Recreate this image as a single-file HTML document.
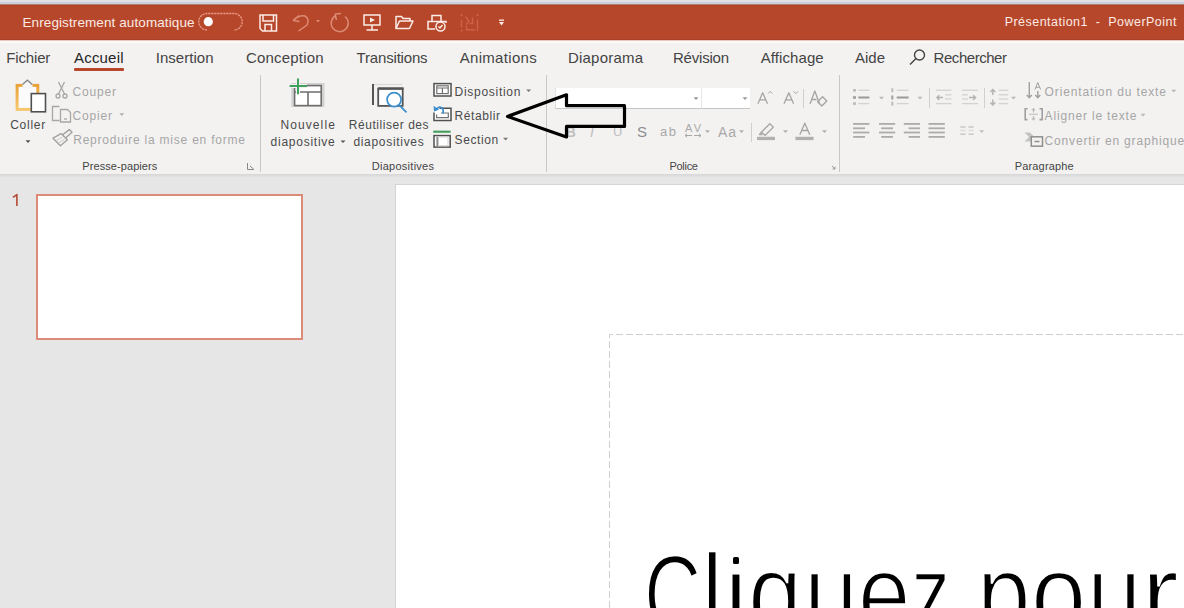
<!DOCTYPE html>
<html><head><meta charset="utf-8"><style>
html,body{margin:0;padding:0;width:1184px;height:608px;overflow:hidden;background:#e6e6e6}
.t{position:absolute;white-space:nowrap;line-height:1;font-family:"Liberation Sans",sans-serif}
.r{position:absolute}
svg{position:absolute;left:0;top:0}
</style></head><body>
<div class="r" style="left:0px;top:0px;width:1184px;height:2px;background:#e1e0e5"></div>
<div class="r" style="left:0px;top:2px;width:1184px;height:2px;background:#cbd1db"></div>
<div class="r" style="left:0px;top:4px;width:1184px;height:1px;background:#b98070"></div>
<div class="r" style="left:0px;top:5px;width:1184px;height:1px;background:#a9432a"></div>
<div class="r" style="left:0px;top:6px;width:1184px;height:33px;background:#b7472a"></div>
<div class="r" style="left:0px;top:39px;width:1184px;height:1px;background:#ab4128"></div>
<div class="r" style="left:0px;top:40px;width:1184px;height:1px;background:#e8c8bf"></div>
<div class="r" style="left:0px;top:41px;width:1184px;height:2px;background:#fdf9f6"></div>
<div class="r" style="left:0px;top:43px;width:1184px;height:131px;background:#f3f2f1"></div>
<div class="r" style="left:0px;top:174px;width:1184px;height:3px;background:linear-gradient(#d6d6d6,#e2e2e2)"></div>
<div class="r" style="left:0px;top:177px;width:1184px;height:431px;background:#e6e6e6"></div>
<div class="t" style="left:22.5px;top:16.2px;font-size:13.5px;letter-spacing:0.096px;color:#fbeae5;">Enregistrement automatique</div>
<div class="t" style="left:1004.7px;top:15.7px;font-size:12.5px;letter-spacing:0.466px;color:#fbeae5;">Présentation1&nbsp;&nbsp;-&nbsp;&nbsp;PowerPoint</div>
<div class="t" style="left:6.3px;top:49.9px;font-size:15px;letter-spacing:-0.168px;color:#444;">Fichier</div>
<div class="t" style="left:74.0px;top:49.9px;font-size:15px;letter-spacing:0.191px;color:#262626;">Accueil</div>
<div class="t" style="left:155.7px;top:49.9px;font-size:15px;letter-spacing:0.033px;color:#444;">Insertion</div>
<div class="t" style="left:245.9px;top:49.9px;font-size:15px;letter-spacing:0.213px;color:#444;">Conception</div>
<div class="t" style="left:356.6px;top:49.9px;font-size:15px;letter-spacing:-0.180px;color:#444;">Transitions</div>
<div class="t" style="left:459.7px;top:49.9px;font-size:15px;letter-spacing:0.311px;color:#444;">Animations</div>
<div class="t" style="left:568.0px;top:49.9px;font-size:15px;letter-spacing:0.204px;color:#444;">Diaporama</div>
<div class="t" style="left:673.0px;top:49.9px;font-size:15px;letter-spacing:-0.218px;color:#444;">Révision</div>
<div class="t" style="left:760.7px;top:49.9px;font-size:15px;letter-spacing:0.091px;color:#444;">Affichage</div>
<div class="t" style="left:855.0px;top:49.9px;font-size:15px;letter-spacing:-0.007px;color:#444;">Aide</div>
<div class="t" style="left:933.6px;top:49.9px;font-size:15px;letter-spacing:-0.459px;color:#444;">Rechercher</div>
<div class="r" style="left:74px;top:68px;width:50px;height:3px;background:#b7472a;border-radius:1px"></div>
<div class="r" style="left:260px;top:75px;width:1px;height:97px;background:#c8c8c8"></div>
<div class="r" style="left:546px;top:75px;width:1px;height:97px;background:#c8c8c8"></div>
<div class="r" style="left:839px;top:75px;width:1px;height:97px;background:#c8c8c8"></div>
<div class="t" style="left:10.2px;top:118.8px;font-size:12px;letter-spacing:0.732px;color:#4a4a4a;">Coller</div>
<div class="t" style="left:72.4px;top:85.8px;font-size:12px;letter-spacing:0.848px;color:#a6a6a6;">Couper</div>
<div class="t" style="left:72.4px;top:109.8px;font-size:12px;letter-spacing:0.850px;color:#a6a6a6;">Copier</div>
<div class="t" style="left:73.2px;top:133.8px;font-size:12px;letter-spacing:0.785px;color:#a6a6a6;">Reproduire la mise en forme</div>
<div class="t" style="left:82.3px;top:161.3px;font-size:11px;letter-spacing:0.079px;color:#444;">Presse-papiers</div>
<div class="t" style="left:280.5px;top:118.8px;font-size:12px;letter-spacing:1.087px;color:#4a4a4a;">Nouvelle</div>
<div class="t" style="left:270.6px;top:135.8px;font-size:12px;letter-spacing:0.750px;color:#4a4a4a;">diapositive</div>
<div class="t" style="left:348.8px;top:118.8px;font-size:12px;letter-spacing:0.546px;color:#4a4a4a;">Réutiliser des</div>
<div class="t" style="left:353.4px;top:135.8px;font-size:12px;letter-spacing:0.691px;color:#4a4a4a;">diapositives</div>
<div class="t" style="left:454.6px;top:85.8px;font-size:12px;letter-spacing:0.711px;color:#4a4a4a;">Disposition</div>
<div class="t" style="left:454.6px;top:109.8px;font-size:12px;letter-spacing:0.564px;color:#4a4a4a;">Rétablir</div>
<div class="t" style="left:454.6px;top:133.8px;font-size:12px;letter-spacing:0.596px;color:#4a4a4a;">Section</div>
<div class="t" style="left:371.8px;top:161.3px;font-size:11px;letter-spacing:0.263px;color:#444;">Diapositives</div>
<div class="r" style="left:555px;top:88px;width:146px;height:21px;background:#fff;border-bottom:1px solid #c6c6c6;border-left:1px solid #e0e0e0;box-sizing:border-box"></div>
<div class="r" style="left:701px;top:88px;width:49px;height:21px;background:#fff;border-bottom:1px solid #c6c6c6;border-left:1px solid #e6e6e6;box-sizing:border-box"></div>
<div class="r" style="left:803px;top:89px;width:1px;height:19px;background:#cfcfcf"></div>
<div class="t" style="left:565.8px;top:124.5px;font-size:14px;letter-spacing:0.000px;color:#bdbdbd;font-weight:bold;">B</div>
<div class="t" style="left:590.0px;top:124.5px;font-size:14px;letter-spacing:0.000px;color:#bdbdbd;font-style:italic;">I</div>
<div class="t" style="left:613.0px;top:125.4px;font-size:13px;letter-spacing:0.000px;color:#bdbdbd;">U</div>
<div class="t" style="left:637.0px;top:124.3px;font-size:15px;letter-spacing:0.000px;color:#8c8c8c;">S</div>
<div class="t" style="left:660.0px;top:125.4px;font-size:13px;letter-spacing:1.540px;color:#a8a8a8;">ab</div>
<div class="t" style="left:685.0px;top:122.7px;font-size:11px;letter-spacing:2.142px;color:#a8a8a8;">AV</div>
<div class="t" style="left:718.0px;top:124.5px;font-size:14px;letter-spacing:0.876px;color:#a8a8a8;">Aa</div>
<div class="r" style="left:751px;top:123px;width:1px;height:19px;background:#cfcfcf"></div>
<div class="t" style="left:669.4px;top:161.3px;font-size:11px;letter-spacing:-0.272px;color:#444;">Police</div>
<div class="r" style="left:929px;top:88px;width:1px;height:20px;background:#d0d0d0"></div>
<div class="r" style="left:984px;top:88px;width:1px;height:20px;background:#d0d0d0"></div>
<div class="t" style="left:1044.6px;top:85.8px;font-size:12px;letter-spacing:0.877px;color:#a6a6a6;">Orientation du texte</div>
<div class="t" style="left:1044.6px;top:109.8px;font-size:12px;letter-spacing:0.828px;color:#a6a6a6;">Aligner le texte</div>
<div class="t" style="left:1044.6px;top:134.8px;font-size:12px;letter-spacing:0.830px;color:#a6a6a6;">Convertir en graphique</div>
<div class="t" style="left:1014.8px;top:161.3px;font-size:11px;letter-spacing:0.146px;color:#444;">Paragraphe</div>
<div class="r" style="left:36px;top:194px;width:267px;height:146px;background:#fff;border:2px solid #de8a78;box-sizing:border-box"></div>
<div class="r" style="left:395px;top:184px;width:789px;height:424px;background:#fff;border-left:1px solid #d4d4d4;border-top:1px solid #d4d4d4;box-sizing:border-box"></div>
<div class="t" style="left:644.4px;top:539.0px;font-size:112px;letter-spacing:0.000px;color:#000;transform:scaleX(0.7106);transform-origin:0 0;-webkit-text-stroke:2.6px #fff;">C</div>
<div class="t" style="left:701.3px;top:537.8px;font-size:112px;letter-spacing:0.000px;color:#000;transform:scaleX(0.9031);transform-origin:0 0;-webkit-text-stroke:2.6px #fff;">l</div>
<div class="t" style="left:721.1px;top:537.8px;font-size:112px;letter-spacing:0.000px;color:#000;transform:scaleX(0.9647);transform-origin:0 0;-webkit-text-stroke:2.6px #fff;">ı</div>
<div class="t" style="left:748.1px;top:537.8px;font-size:112px;letter-spacing:0.000px;color:#000;transform:scaleX(0.869);transform-origin:0 0;-webkit-text-stroke:2.6px #fff;">q</div>
<div class="t" style="left:803.7px;top:537.8px;font-size:112px;letter-spacing:0.000px;color:#000;transform:scaleX(0.8655);transform-origin:0 0;-webkit-text-stroke:2.6px #fff;">u</div>
<div class="t" style="left:858.3px;top:537.8px;font-size:112px;letter-spacing:0.000px;color:#000;transform:scaleX(0.8415);transform-origin:0 0;-webkit-text-stroke:2.6px #fff;">e</div>
<div class="t" style="left:911.3px;top:537.8px;font-size:112px;letter-spacing:0.000px;color:#000;transform:scaleX(0.7003);transform-origin:0 0;-webkit-text-stroke:2.6px #fff;">z</div>
<div class="t" style="left:976.7px;top:537.8px;font-size:112px;letter-spacing:0.000px;color:#000;transform:scaleX(0.861);transform-origin:0 0;-webkit-text-stroke:2.6px #fff;">p</div>
<div class="t" style="left:1031.0px;top:537.8px;font-size:112px;letter-spacing:0.000px;color:#000;transform:scaleX(0.8872);transform-origin:0 0;-webkit-text-stroke:2.6px #fff;">o</div>
<div class="t" style="left:1086.7px;top:537.8px;font-size:112px;letter-spacing:0.000px;color:#000;transform:scaleX(0.876);transform-origin:0 0;-webkit-text-stroke:2.6px #fff;">u</div>
<div class="t" style="left:1141.2px;top:537.8px;font-size:112px;letter-spacing:0.000px;color:#000;transform:scaleX(1.0219);transform-origin:0 0;-webkit-text-stroke:2.6px #fff;">r</div>
<div class="r" style="left:733.2px;top:556.8px;width:6px;height:7px;background:#000;border-radius:1.5px"></div>
<svg width="1184" height="608" viewBox="0 0 1184 608">
<path d="M207 30 A8.25 8.25 0 0 1 207 13.5 H234 A8.25 8.25 0 0 1 234 30" fill="none" stroke="#e89a86" stroke-width="1.3" stroke-dasharray="2.2 0.8"/>
<circle cx="208.3" cy="21.7" r="4.6" fill="#fff"/>
<g fill="none" stroke="#fbece7" stroke-width="1.5"><path d="M260 15 H276.5 V31 H262.5 L260 28.5 Z"/><path d="M263 15 V21 H273.5 V15"/><path d="M265 31 V24.5 H271.5 V31"/></g>
<g fill="none" stroke="#dc8a74" stroke-width="1.5"><path d="M293 20.5 L299 15.5 M293 20.5 L299.5 21.5"/><path d="M293.5 20 Q300 14.5 305 16 Q310 19 307 25 L298.5 31"/><path d="M316 20 L320 20 L318 22.5 Z" fill="#dc8a74" stroke="none"/><path d="M336 15.5 A8.5 8.5 0 1 0 345 16.5"/><path d="M335 14 L336.5 20 M335 14 L341 13.5"/></g>
<g fill="none" stroke="#fbece7" stroke-width="1.5"><rect x="364" y="15" width="16" height="10"/><path d="M372 25 V30 M366.5 30 H378"/><path d="M370 17.5 L375 20 L370 22.5 Z" fill="#fbece7" stroke="none"/></g>
<g fill="none" stroke="#fbece7" stroke-width="1.5" stroke-linejoin="round"><path d="M396 28.5 V16.5 H401.5 L403 18.5 H410 V21"/><path d="M396 28.5 L399.5 21 H413 L409.5 28.5 Z"/></g>
<g fill="none" stroke="#fbece7" stroke-width="1.5"><path d="M432 21 V15.5 H441 V21"/><path d="M435 29 H428 V21.5 H446 V23"/><circle cx="440.5" cy="26.5" r="4.5"/><path d="M438.5 26.5 L440 28 L442.5 25"/></g>
<g fill="none" stroke="#cf6149" stroke-width="1.4"><path d="M461.5 20 V27.5 M477.5 19.5 V31 M465.5 16.5 L469 21.5 L466 24.5 M469.5 23.5 H472.5 V17.5 M466.5 25.5 V29.8 H475"/></g><g fill="#d66a52"><rect x="460.8" y="14.3" width="1.6" height="1.6"/><rect x="476.8" y="14.3" width="1.6" height="1.6"/><rect x="460.8" y="29.8" width="1.6" height="1.6"/></g>
<g fill="#fbece7"><rect x="499" y="19.5" width="5" height="1.3"/><path d="M499 22 H504 L501.5 25.5 Z"/></g>
<g fill="none" stroke="#444" stroke-width="1.4"><circle cx="919.5" cy="55" r="5"/><path d="M916 58.5 L910 64.5"/></g>
<defs><linearGradient id="cg" x1="0" y1="0" x2="0" y2="1"><stop offset="0" stop-color="#e9a23a"/><stop offset="1" stop-color="#f6c870"/></linearGradient></defs><rect x="17.1" y="85.4" width="20.7" height="24" fill="#fbfbfb" stroke="url(#cg)" stroke-width="3"/>
<path d="M22.5 88.5 V84 L27.4 80 L32.5 84 V88.5 Z" fill="#f6f6f6"/><path d="M22.5 84.5 L27.4 80.2 L32.3 84.5" fill="none" stroke="#8a8a8a" stroke-width="1.4"/>
<rect x="31.3" y="93.6" width="14.2" height="18.2" fill="#fff" stroke="#505050" stroke-width="1.6"/>
<path d="M25.5 140.3 H30.5 L28 143.0 Z" fill="#555"/>
<g fill="none" stroke="#a6a6a6" stroke-width="1.3"><path d="M58.5 82 L64.5 94 M64.5 82 L58.5 94"/><circle cx="58" cy="96" r="2"/><circle cx="65" cy="96" r="2"/></g>
<g fill="none" stroke="#a6a6a6" stroke-width="1.3"><path d="M59.5 106.5 H52.5 V120.5 H59.5"/><path d="M60.5 109.5 H67.5 L70.5 112.5 V122 H60.5 Z"/><path d="M64 119 H67"/></g>
<path d="M119.3 113.3 H124.3 L121.8 116.0 Z" fill="#b0b0b0"/>
<g fill="none" stroke="#a2a2a2" stroke-width="1.4" stroke-linejoin="round"><path d="M53 138.2 L61 133.6 L67.4 139.8 L60.4 145.8 Z"/><path d="M56.5 140.5 L62.5 137 M58.5 143 L64.5 139.5" stroke="#c8c8c8" stroke-width="1"/><path d="M62.8 134.6 L69.4 129.6 L72 132.3 L65.8 137.8"/></g>
<g fill="none" stroke="#888" stroke-width="1"><path d="M247.5 163 V169.5 H254"/><path d="M250 166 L253.5 169"/></g>
<rect x="291.3" y="83" width="33.2" height="24" fill="#d2d2d2"/>
<rect x="294.6" y="85.6" width="26.6" height="20" fill="#fff" stroke="#6e6e6e" stroke-width="1.6"/>
<path d="M295 92 H321 M308 92 V105.5" stroke="#6e6e6e" stroke-width="1.6" fill="none"/>
<path d="M289.6 86 H307 M298 78.6 V94.2" stroke="#f3f2f1" stroke-width="4" fill="none"/><path d="M289.6 86 H307 M298 78.6 V94.2" stroke="#40a060" stroke-width="2" fill="none"/>
<path d="M340.5 140.4 H345.5 L343 143.1 Z" fill="#555"/>
<path d="M373.5 84.5 H402" stroke="#d8d8d8" stroke-width="1.2"/><path d="M373 84 V105" stroke="#555" stroke-width="2"/>
<rect x="378.2" y="88.7" width="24.5" height="17.2" fill="#fff" stroke="#555" stroke-width="1.8"/>
<path d="M378 88.5 H403.5" stroke="#555" stroke-width="2.4"/>
<circle cx="394.1" cy="99.6" r="7" fill="#fff" stroke="#3d8fc9" stroke-width="1.7"/><path d="M399 104.8 L406.5 112.3" stroke="#3d8fc9" stroke-width="1.7"/>
<rect x="434" y="83.6" width="17" height="12.4" fill="#fff" stroke="#4f4f4f" stroke-width="1.5"/><g fill="none" stroke="#707070" stroke-width="1.2"><rect x="436.8" y="85.8" width="11.4" height="7.8"/><path d="M437 88 H448 M442.4 88 V93.5"/></g>
<path d="M526.2 89.39999999999999 H531.2 L528.7 92.1 Z" fill="#777"/>
<path d="M439.5 108.2 H451 V120.6 H434 V112.5" fill="#fff" stroke="#4f4f4f" stroke-width="1.5"/><g fill="none" stroke="#707070" stroke-width="1.2"><path d="M441 113 H448.3 V117.6 H436.6 V114.5"/></g>
<g fill="none" stroke="#3a8ed0" stroke-width="1.8"><path d="M436.5 109 Q439.5 105.5 442.5 108.5 Q443.5 110 443.2 113.5"/></g><path d="M433.6 105.8 L434 111.4 L439 109.8 Z" fill="#3a8ed0"/>
<path d="M433.2 131.7 H450.6" stroke="#3f9e5a" stroke-width="2.1"/>
<rect x="434" y="135.6" width="16.2" height="11.5" fill="#fff" stroke="#4f4f4f" stroke-width="1.5"/><path d="M437.2 137 V146" stroke="#8a8a8a" stroke-width="1.6"/><rect x="438.5" y="137" width="9.5" height="8.8" fill="none" stroke="#d0d0d0" stroke-width="1"/>
<path d="M503.1 137.8 H508.1 L505.6 140.5 Z" fill="#777"/>
<path d="M693.5 97.3 H698.5 L696 100.0 Z" fill="#999"/>
<path d="M742.5 97.3 H747.5 L745 100.0 Z" fill="#999"/>
<g fill="none" stroke="#a4a4a4" stroke-width="1.3" stroke-linejoin="round"><path d="M757.9 103.8 L762.7 92.8 L767.5 103.8 M759.6 99.8 H765.8"/><path d="M768 93.6 L770.2 91.4 L772.4 93.6" stroke-width="1"/></g>
<g fill="none" stroke="#a4a4a4" stroke-width="1.3" stroke-linejoin="round"><path d="M784 103.8 L788.8 92.8 L793.6 103.8 M785.7 99.8 H791.9"/><path d="M793.6 91.4 L795.8 93.6 L798 91.4" stroke-width="1"/></g>
<g fill="none" stroke="#a4a4a4" stroke-width="1.3" stroke-linejoin="round"><path d="M810 104 L814.8 91 L819.6 104 M811.8 99.5 H816.5"/><path d="M817.6 101.8 L822.6 96.8 L826.8 101 L821.8 106 Z"/></g>
<path d="M685 135.5 H692 M694 135.5 H701 M685 135.5 L687 133.8 M685 135.5 L687 137.2 M701 135.5 L699 133.8 M701 135.5 L699 137.2" fill="none" stroke="#a8a8a8" stroke-width="1"/>
<path d="M705.0 130.3 H710.0 L707.5 133.0 Z" fill="#b0b0b0"/>
<path d="M739.0 130.3 H744.0 L741.5 133.0 Z" fill="#b0b0b0"/>
<g fill="none" stroke="#a8a8a8" stroke-width="1.3" stroke-linejoin="round"><path d="M761.5 132 L769.8 123.7 L773.3 127.2 L765 135.5 Z M761.5 132 L759.5 134.5 L762.5 134.5"/></g><rect x="757" y="136.8" width="18" height="3.3" fill="#b0b0b0"/>
<path d="M783.0 130.3 H788.0 L785.5 133.0 Z" fill="#b0b0b0"/>
<g fill="none" stroke="#a4a4a4" stroke-width="1.3" stroke-linejoin="round"><path d="M799.8 134.7 L804.8 123.2 L809.8 134.7 M801.6 130.5 H808"/></g>
<rect x="795.4" y="136.8" width="18.2" height="3.3" fill="#b0b0b0"/>
<path d="M822.0 130.3 H827.0 L824.5 133.0 Z" fill="#b0b0b0"/>
<g fill="none" stroke="#999" stroke-width="1"><path d="M832 166 L835 169 M835 166.5 V169 H832.5"/></g>
<rect x="853" y="89.0" width="3" height="2.6" fill="#bdbdbd"/>
<rect x="853" y="96.2" width="3" height="2.6" fill="#a0a0a0"/>
<rect x="853" y="102.3" width="3" height="2.6" fill="#bdbdbd"/>
<path d="M858.3 90.3 H869.4" stroke="#d2d2d2" stroke-width="1.3"/>
<path d="M858.3 97.5 H869.4" stroke="#9a9a9a" stroke-width="2"/>
<path d="M858.3 103.6 H869.4" stroke="#d2d2d2" stroke-width="1.3"/>
<path d="M879.0 96.8 H884.0 L881.5 99.5 Z" fill="#b8b8b8"/>
<rect x="891.3" y="88.3" width="2" height="4" fill="#bdbdbd"/>
<rect x="891.3" y="95.5" width="2" height="4" fill="#a0a0a0"/>
<rect x="891.3" y="101.6" width="2" height="4" fill="#bdbdbd"/>
<path d="M896.7 90.3 H908.6" stroke="#d2d2d2" stroke-width="1.3"/>
<path d="M896.7 97.5 H908.6" stroke="#9a9a9a" stroke-width="2"/>
<path d="M896.7 103.6 H908.6" stroke="#d2d2d2" stroke-width="1.3"/>
<path d="M917.5 96.8 H922.5 L920 99.5 Z" fill="#b8b8b8"/>
<path d="M936 90.3 H951.4" stroke="#d2d2d2" stroke-width="1.3"/>
<path d="M945 94.8 H951.4" stroke="#d2d2d2" stroke-width="1.3"/>
<path d="M945 99 H951.4" stroke="#d2d2d2" stroke-width="1.3"/>
<path d="M936 103.6 H951.4" stroke="#d2d2d2" stroke-width="1.3"/>
<path d="M943 97.6 H937 M939.3 95.3 L937 97.6 L939.3 99.9" stroke="#b4b4b4" stroke-width="1.5" fill="none"/>
<path d="M962 90.3 H978" stroke="#d2d2d2" stroke-width="1.3"/>
<path d="M962 94.8 H968" stroke="#d2d2d2" stroke-width="1.3"/>
<path d="M962 99 H968" stroke="#d2d2d2" stroke-width="1.3"/>
<path d="M962 103.6 H978" stroke="#d2d2d2" stroke-width="1.3"/>
<path d="M969 97.6 H975.5 M973.2 95.3 L975.5 97.6 L973.2 99.9" stroke="#b4b4b4" stroke-width="1.5" fill="none"/>
<path d="M992.8 89.5 V95 M990.3 92 L992.8 89.5 L995.3 92 M992.8 99.5 V105 M990.3 102.5 L992.8 105 L995.3 102.5" stroke="#b4b4b4" stroke-width="1.5" fill="none"/>
<path d="M998.7 90.3 H1008.3" stroke="#d2d2d2" stroke-width="1.3"/>
<path d="M998.7 94.8 H1008.3" stroke="#d2d2d2" stroke-width="1.3"/>
<path d="M998.7 99 H1008.3" stroke="#d2d2d2" stroke-width="1.3"/>
<path d="M998.7 103.6 H1008.3" stroke="#d2d2d2" stroke-width="1.3"/>
<path d="M1011.0 96.8 H1016.0 L1013.5 99.5 Z" fill="#b8b8b8"/>
<path d="M853.1 123.9 H869.4" stroke="#ababab" stroke-width="1.8"/>
<path d="M853.1 128.3 H865" stroke="#ababab" stroke-width="1.8"/>
<path d="M853.1 132.5 H869.4" stroke="#ababab" stroke-width="1.8"/>
<path d="M853.1 136.9 H865" stroke="#ababab" stroke-width="1.8"/>
<path d="M879 123.9 H895.2" stroke="#ababab" stroke-width="1.8"/>
<path d="M881.2 128.3 H893" stroke="#ababab" stroke-width="1.8"/>
<path d="M879 132.5 H895.2" stroke="#ababab" stroke-width="1.8"/>
<path d="M881.2 136.9 H893" stroke="#ababab" stroke-width="1.8"/>
<path d="M903.8 123.9 H920" stroke="#ababab" stroke-width="1.8"/>
<path d="M908.6 128.3 H920" stroke="#ababab" stroke-width="1.8"/>
<path d="M903.8 132.5 H920" stroke="#ababab" stroke-width="1.8"/>
<path d="M908.6 136.9 H920" stroke="#ababab" stroke-width="1.8"/>
<path d="M928.5 123.9 H944.8" stroke="#ababab" stroke-width="1.8"/>
<path d="M928.5 128.3 H944.8" stroke="#ababab" stroke-width="1.8"/>
<path d="M928.5 132.5 H944.8" stroke="#ababab" stroke-width="1.8"/>
<path d="M928.5 136.9 H944.8" stroke="#ababab" stroke-width="1.8"/>
<path d="M960.3 127 H965.5" stroke="#c4c4c4" stroke-width="1.4"/>
<path d="M968.5 127 H973.6" stroke="#c4c4c4" stroke-width="1.4"/>
<path d="M960.3 130.5 H965.5" stroke="#dcdcdc" stroke-width="1.4"/>
<path d="M968.5 130.5 H973.6" stroke="#dcdcdc" stroke-width="1.4"/>
<path d="M960.3 134.2 H965.5" stroke="#c4c4c4" stroke-width="1.4"/>
<path d="M968.5 134.2 H973.6" stroke="#c4c4c4" stroke-width="1.4"/>
<path d="M979.2 130.20000000000002 H984.2 L981.7 132.9 Z" fill="#c0c0c0"/>
<g fill="none" stroke="#a0a0a0" stroke-width="1.4"><path d="M1029.3 82 V97.5 M1026.8 95 L1029.3 97.8 L1031.8 95 M1037.8 91 V97.5 M1035.3 95 L1037.8 97.8 L1040.3 95"/><path d="M1035 89.5 L1037.8 82.5 L1040.6 89.5 M1036 87.3 H1039.6" stroke-width="1"/></g>
<path d="M1171.3 89.8 H1176.3 L1173.8 92.5 Z" fill="#b8b8b8"/>
<g fill="none" stroke="#a0a0a0" stroke-width="1.6"><path d="M1027.5 108.8 H1025.2 V119.6 H1027.5 M1039.5 108.8 H1042.2 V119.6 H1039.5"/></g><g fill="none" stroke="#bcbcbc" stroke-width="1.1"><path d="M1029 114.2 H1038 M1033.5 108.5 V112.5 M1031.8 110.3 L1033.5 108.5 L1035.2 110.3 M1033.5 116 V120 M1031.8 118.2 L1033.5 120 L1035.2 118.2"/></g>
<path d="M1140.5 113.8 H1145.5 L1143 116.5 Z" fill="#b8b8b8"/>
<path d="M1024.5 132.5 H1030 L1034.5 137 L1030 141.5 H1024.5 L1029 137 Z" fill="#c4c4c4"/><rect x="1031.3" y="136.8" width="11.2" height="9.4" fill="#f3f2f1" stroke="#8f8f8f" stroke-width="1.5"/><path d="M1034.5 141.5 H1039.5" stroke="#8f8f8f" stroke-width="1.5"/>
<path d="M16.9 206 V194.6 L13 197.4" fill="none" stroke="#b44a34" stroke-width="1.6" stroke-linejoin="round"/>
<path d="M609.5 608 V334.5 H1184" fill="none" stroke="#cfcfcf" stroke-width="1" stroke-dasharray="7 3"/>
<path d="M507.5 116.4 L566.5 94.8 L566.5 105.7 L624.5 105.7 L624.5 126.4 L566.5 126.4 L566.5 137 Z" fill="none" stroke="#000" stroke-width="3.2" stroke-linejoin="round"/>
</svg>
</body></html>
